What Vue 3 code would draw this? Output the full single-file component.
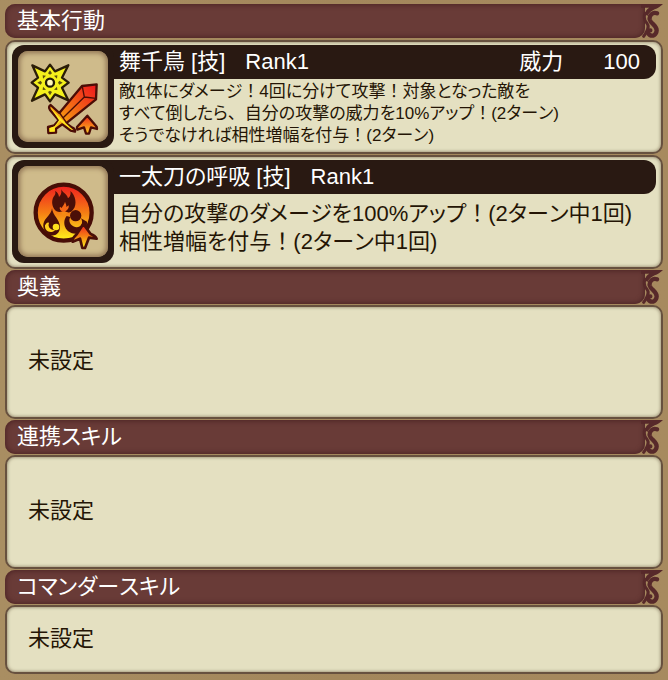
<script setup>
const skills = [
  {
    id: 'maichidori',
    name: '舞千鳥 [技]',
    rank: 'Rank1',
    power: '100',
    small: true,
    lines: [
      '敵1体にダメージ！4回に分けて攻撃！対象となった敵を',
      'すべて倒したら、自分の攻撃の威力を10%アップ！(2ターン)',
      'そうでなければ相性増幅を付与！(2ターン)',
    ],
  },
  {
    id: 'kokyu',
    name: '一太刀の呼吸 [技]',
    rank: 'Rank1',
    power: '',
    small: false,
    lines: ['自分の攻撃のダメージを100%アップ！(2ターン中1回)', '相性増幅を付与！(2ターン中1回)'],
  },
]

const sections = [
  { title: '基本行動', skills },
  { title: '奥義', skills: [] },
  { title: '連携スキル', skills: [] },
  { title: 'コマンダースキル', skills: [], compact: true },
]

// Punctuation and long-vowel bars keep their full em width, so they are split out of the proportional text.
const fullWidth = /([！、ー])/
const parts = (line) => line.split(fullWidth).filter(Boolean)
</script>

<template>
  <main class="sheet">
    <section v-for="section in sections" :key="section.title" class="group">
      <header class="band">
        <h2 class="band-title">
          <span v-for="(part, i) in parts(section.title)" :key="i" :class="{ mark: fullWidth.test(part) }">{{ part }}</span>
        </h2>
        <svg class="flourish" viewBox="0 0 66 102" aria-hidden="true">
          <path class="leaf" d="M0 0H66C58 8 50 13 41 16C32 20 25 26 19 36L12 30C13 22 18 14 25 11H0Z" />
          <path class="vine" d="M48 28C36 23 24 33 26 46C29 60 47 63 47 79C46 93 35 98 26 93C19 88 20 79 28 79" />
          <path class="vine thin" d="M12 28C7 42 10 50 18 58C26 68 20 80 8 97" />
        </svg>
      </header>

      <article v-for="skill in section.skills" :key="skill.id" class="panel skill">
        <div class="icon-frame">
          <svg v-if="skill.id === 'maichidori'" class="icon" viewBox="30 27 270 273" aria-hidden="true">
            <defs>
              <linearGradient id="blade" x1="1" y1="0" x2="0" y2="1">
                <stop offset="0" stop-color="#f0141c" />
                <stop offset="0.25" stop-color="#f0401a" />
                <stop offset="0.65" stop-color="#f58a12" />
                <stop offset="1" stop-color="#fff21c" />
              </linearGradient>
              <linearGradient id="rise" x1="0" y1="0" x2="0" y2="1">
                <stop offset="0" stop-color="#f0281a" />
                <stop offset="0.5" stop-color="#f5781a" />
                <stop offset="1" stop-color="#ffd028" />
              </linearGradient>
            </defs>
            <path fill="#f4f01c" stroke="#2b1d08" stroke-width="7" stroke-linejoin="round" d="M126 68L141 88L181 70L162 107L182 122L162 137L181 175L141 157L126 178L111 157L72 176L90 137L71 122L90 107L73 70L111 88Z" />
            <g fill="#5c4f10">
              <path d="M126 85L132 94L126 98L120 94Z" />
              <path d="M126 160L132 150L126 146L120 150Z" />
              <path d="M88 122L98 116L102 122L98 128Z" />
              <path d="M164 122L154 116L150 122L154 128Z" />
              <path d="M104 100L114 101L105 110Z" />
              <path d="M148 100L138 101L147 110Z" />
              <path d="M104 144L114 143L105 134Z" />
              <path d="M148 144L138 143L147 134Z" />
            </g>
            <circle cx="126" cy="122" r="12" fill="#fff8b8" stroke="#221a08" stroke-width="7" />
            <g stroke="#4b0d06" stroke-width="7" stroke-linejoin="round">
              <path fill="url(#blade)" d="M222 132L266 127L264 172L174 244L193 257Q203 262 201 269L188 266L163 247L144 260L144 272L121 273L120 255L139 250L152 235L126 204Q120 194 128 189L154 213Z" />
              <path fill="none" stroke-width="4" d="M223 134L229 165L264 169M229 165L164 229M155 213L177 244" />
              <path fill="#ffe81e" stroke="none" d="M127 196L160 231L196 265L189 262L157 237L141 255L140 268L125 269V259L140 253L153 235Z" />
              <path fill="url(#rise)" d="M238 221L266 254L267 261L249 256L243 275H234L228 256L208 263L207 255Z" />
            </g>
          </svg>
          <svg v-else class="icon" viewBox="30 27 270 273" aria-hidden="true">
            <defs>
              <linearGradient id="ember" x1="0" y1="0" x2="0" y2="1">
                <stop offset="0" stop-color="#ef1c20" />
                <stop offset="0.5" stop-color="#f57d14" />
                <stop offset="1" stop-color="#fff51c" />
              </linearGradient>
            </defs>
            <circle cx="167" cy="167" r="84" fill="url(#ember)" stroke="#470d06" stroke-width="13" />
            <g fill="#4b0f08">
              <path d="M158 91C161 108 177 109 180 124C188 118 189 109 187 102C203 115 208 143 196 157C188 170 176 168 168 160C158 168 145 166 138 155C130 142 131 126 139 116C143 111 143 107 141 102C149 106 152 112 153 120C161 113 162 103 158 91Z" />
              <path d="M132 154C134 176 156 188 156 211C155 234 134 242 118 230C101 215 103 195 116 182C125 172 131 164 132 154Z" />
              <circle cx="203" cy="176" r="17" />
              <path d="M176 177C160 197 172 230 203 230C226 229 239 213 237 194L219 184C230 203 212 217 196 208C183 201 182 188 187 180Z" />
            </g>
            <path fill="#f56818" d="M171 134C173 141 176 144 175 150L182 145C184 154 179 160 169 165C158 162 153 157 156 149L161 153C163 147 170 142 171 134Z" />
            <path fill="#f58a14" d="M158 165H179L168 181Z" />
            <path fill="#ffcf1b" d="M111 205C115 199 119 194 123 198C118 209 129 222 142 218C133 231 109 226 111 205Z" />
            <circle cx="144" cy="210" r="10" fill="#ffe01c" />
            <path fill="url(#ember)" stroke="#4b0f08" stroke-width="8" stroke-linejoin="round" d="M226 201L248 231Q262 236 266 245L243 242L231 273H223L216 245L194 254Q191 246 206 232Z" />
          </svg>
        </div>
        <div class="details">
          <div class="skill-bar">
            <h3 class="skill-name">{{ skill.name }}</h3>
            <span class="rank">{{ skill.rank }}</span>
            <dl v-if="skill.power" class="power">
              <dt>威力</dt>
              <dd>{{ skill.power }}</dd>
            </dl>
          </div>
          <p class="effect" :class="{ small: skill.small }">
            <span v-for="line in skill.lines" :key="line" class="line">
              <span v-for="(part, i) in parts(line)" :key="i" :class="{ mark: fullWidth.test(part) }">{{ part }}</span>
            </span>
          </p>
        </div>
      </article>

      <div v-if="!section.skills.length" class="panel empty" :class="{ compact: section.compact }">
        <p class="unset">未設定</p>
      </div>
    </section>
  </main>
</template>

<style>
body {
  margin: 0;
  background: #a5895e;
}
</style>

<style scoped>
.sheet {
  box-sizing: border-box;
  min-height: 100vh;
  padding: 4px 5px 6px;
  display: flex;
  flex-direction: column;
  gap: 1px;
  background: linear-gradient(90deg, #a98e62, #a3875c 50%, #a78a5f);
  color: #241505;
  font-family: "Liberation Sans", "Noto Sans CJK JP", sans-serif;
  font-size: 22px;
  font-feature-settings: "palt";
}

h2,
h3,
p,
dl,
dd {
  margin: 0;
  font-size: inherit;
  font-weight: 400;
}

.group {
  display: flex;
  flex-direction: column;
  gap: 1px;
}

.group:first-child .band {
  margin-bottom: 1px;
}

.band {
  display: flex;
  height: 34px;
}

.band-title {
  flex: 1;
  padding-left: 12px;
  border-radius: 10px 0 10px 10px;
  background: #693b37;
  box-shadow: inset 0 0 5px 1px #4d2425;
  color: #fff;
  line-height: 34px;
}

.flourish {
  flex: none;
  width: 22px;
  height: 34px;
  margin-left: -4px;
}

.leaf {
  fill: #57292a;
}

.vine {
  fill: none;
  stroke: #57292a;
  stroke-width: 13;
  stroke-linecap: round;
}

.thin {
  stroke-width: 9;
}

.panel {
  box-sizing: border-box;
  height: 114px;
  border: 2px solid #67513f;
  border-radius: 10px;
  background: #e4e0c1;
  box-shadow: inset 0 0 3px 1px #a79e82;
}

.skill {
  display: flex;
  padding: 3px 5px;
  isolation: isolate;
}

.icon-frame {
  box-sizing: border-box;
  flex: none;
  width: 102px;
  height: 103px;
  padding: 6px;
  border-radius: 12px;
  background: #291912;
}

.icon {
  display: block;
  width: 90px;
  height: 91px;
  border-radius: 10px;
  background: #cfbb8b;
  box-shadow: inset 0 0 5px 2px #8f7353;
}

.details {
  flex: 1;
  min-width: 0;
}

.skill-bar {
  display: flex;
  height: 34px;
  margin-left: -12px;
  padding: 0 16px 0 17px;
  border-radius: 0 12px 12px 0;
  background: #291912;
  color: #fff;
  line-height: 34px;
  position: relative;
  z-index: -1;
}

.rank {
  margin-left: 20px;
}

.power {
  display: flex;
  gap: 40px;
  margin-left: auto;
}

.effect {
  padding: 6px 0 0 5px;
  line-height: 28px;
  white-space: nowrap;
}

.effect.small {
  padding-top: 2px;
  font-size: 17px;
  line-height: 22px;
}

.line {
  display: block;
}

.mark {
  font-feature-settings: normal;
}

.empty {
  display: flex;
  align-items: center;
  padding: 0 21px 8px;
}

.compact {
  height: 69px;
}
</style>
